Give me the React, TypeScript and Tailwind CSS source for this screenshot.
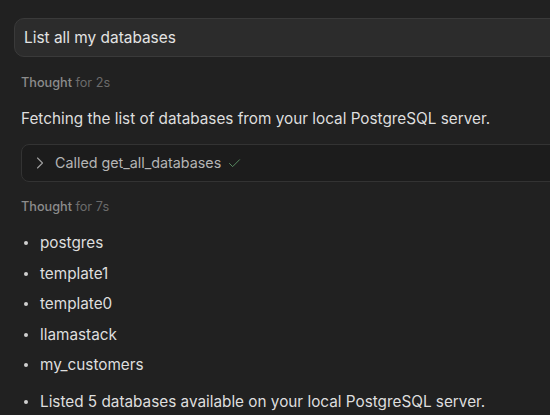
import { ChevronRight, Check } from "lucide-react";

const dbs = ["postgres", "template1", "template0", "llamastack", "my_customers"];

function Thought({ secs }: { secs: number }) {
  return (
    <p className="text-[12.7px] leading-5 font-medium text-[#8c8c8c]">
      Thought <span className="font-normal text-[#6b6b6b]">for {secs}s</span>
    </p>
  );
}

function Bullet({ children }: { children: React.ReactNode }) {
  return (
    <li className="flex items-center">
      <span className="ml-[3px] mr-[12px] h-[4px] w-[4px] rounded-full bg-[#d0d0d0]" />
      {children}
    </li>
  );
}

export default function App() {
  return (
    <div
      className="h-[415px] w-[550px] overflow-hidden bg-[#212121] pt-[18px] pl-[14px] text-[#dedede]"
      style={{ fontFamily: "Inter, 'Noto Sans', sans-serif" }}
    >
      {/* user prompt */}
      <div className="-mr-4 flex h-[39px] items-center rounded-[10px] border border-[#3a3a3a] bg-[#2c2c2c] pl-[9px] text-[15.4px] text-[#e3e3e3]">
        List all my databases
      </div>

      <div className="pl-[7px]">
        <div className="mt-[16px]">
          <Thought secs={2} />
        </div>

        <p className="mt-[16px] text-[15.3px] leading-5 text-[#dedede]">
          Fetching the list of databases from your local PostgreSQL server.
        </p>

        {/* tool call */}
        <div className="-mr-4 mt-[15px] flex h-[38px] items-center gap-[5px] rounded-[8px] border border-[#333333] bg-[#1c1c1c] pl-[8px] text-[14.3px] text-[#b5b5b5]">
          <ChevronRight size={20} strokeWidth={1.3} className="text-[#a0a0a0]" />
          <span>Called get_all_databases</span>
          <Check size={15} strokeWidth={1.4} className="ml-[1px] text-[#5f9a6a]" />
        </div>

        <div className="mt-[15px]">
          <Thought secs={7} />
        </div>

        <ul className="mt-[16px] flex flex-col gap-[10.5px] text-[15.3px] leading-5">
          {dbs.map((d) => (
            <Bullet key={d}>{d}</Bullet>
          ))}
          <div className="mt-[6px]">
            <Bullet>Listed 5 databases available on your local PostgreSQL server.</Bullet>
          </div>
        </ul>
      </div>
    </div>
  );
}
